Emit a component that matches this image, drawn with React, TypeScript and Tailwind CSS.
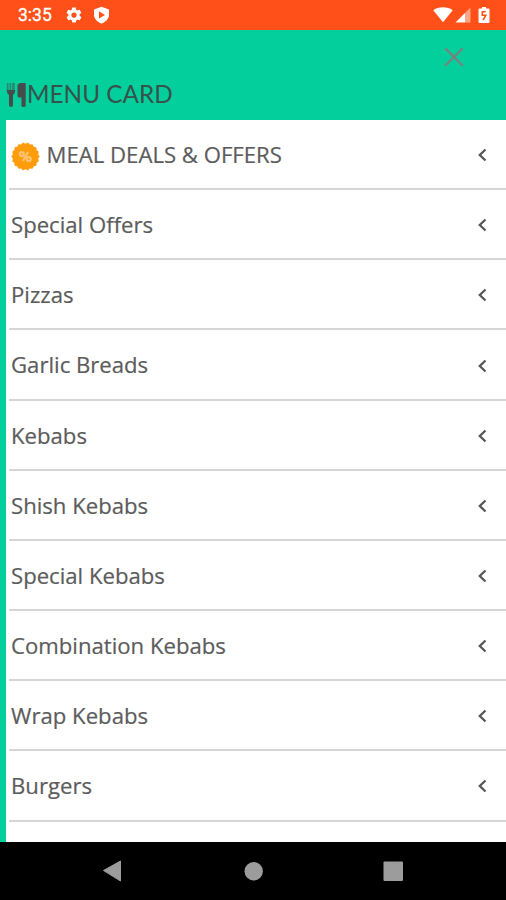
import { ReactNode } from "react";

interface Category {
    name: string
    offer?: boolean
}

const categories: Category[] = [
    { name: "MEAL DEALS & OFFERS", offer: true },
    { name: "Special Offers" },
    { name: "Pizzas" },
    { name: "Garlic Breads" },
    { name: "Kebabs" },
    { name: "Shish Kebabs" },
    { name: "Special Kebabs" },
    { name: "Combination Kebabs" },
    { name: "Wrap Kebabs" },
    { name: "Burgers" },
];

function StatusBar() {
    return (
        <div className="flex h-[30px] shrink-0 items-center bg-[#ff5019] pl-[18px] pr-[16px] text-white">
            <span className="w-[47px] pt-[2px] font-['Roboto',sans-serif] text-[17.500px] leading-none [-webkit-text-stroke:0.300px_white]">3:35</span>
            <svg width="18" height="18" viewBox="0 0 24 24" fill="currentColor">
                <path fillRule="evenodd" d="M19.4 13c0-.3.1-.6.1-1s0-.7-.1-1l2.1-1.700c.2-.1.3-.4.1-.6l-2-3.500c-.1-.2-.4-.3-.6-.2l-2.500 1c-.5-.4-1.100-.7-1.700-1l-.4-2.600c0-.2-.2-.4-.5-.4h-4c-.2 0-.4.2-.5.4L9 5c-.6.3-1.200.6-1.700 1l-2.500-1c-.2-.1-.5 0-.6.2l-2 3.500c-.1.2-.1.5.1.6L4.500 11c0 .3-.1.6-.1 1s0 .7.1 1l-2.100 1.700c-.2.1-.3.4-.1.6l2 3.500c.1.2.4.3.6.2l2.500-1c.5.4 1.100.7 1.700 1l.4 2.600c0 .2.2.4.5.4h4c.2 0 .4-.2.5-.4L15 19c.6-.3 1.200-.6 1.700-1l2.500 1c.2.1.5 0 .6-.2l2-3.500c.1-.2.1-.5-.1-.6zM12 15.500a3.500 3.500 0 1 1 0-7 3.500 3.500 0 0 1 0 7z" />
            </svg>
            <svg className="ml-[10px]" width="17" height="18" viewBox="0 0 17 18">
                <path fill="currentColor" d="M8.500.7 16 3.500v5.200c0 4-3 7.200-7.500 8.800C4 15.900 1 12.700 1 8.700V3.500z" />
                <path fill="#ff5019" d="M6 5.300v7.200l6-3.600z" />
            </svg>
            <svg className="ml-auto" width="20" height="16" viewBox="0 0 20 16">
                <path fill="currentColor" d="M.3 3.200C5.800-.6 14.200-.6 19.700 3.200L10 15.300z" />
            </svg>
            <svg className="ml-[2px]" width="16" height="16" viewBox="0 0 16 16">
                <path fill="#ffa585" d="M10 6 15.500.5v15H10z" />
                <path fill="currentColor" d="M.5 15.500 10 6v9.500z" />
            </svg>
            <svg className="ml-[7px]" width="12" height="18" viewBox="0 0 12 18">
                <path fill="currentColor" d="M4 1h4v1.500h2.500q1 0 1 1V16q0 1-1 1h-9q-1 0-1-1V3.500q0-1 1-1H4z" />
                <path fill="none" stroke="#ff5019" strokeWidth="1.600" d="M7.800 5.500 4.300 6v3.300h3.500L5 14.200" />
            </svg>
        </div>
    )
}

function CutleryIcon() {
    return (
        <svg width="21" height="26" viewBox="0 0 21 26" fill="#484b4b">
            <path fillOpacity=".55" d="M.8 1h1.700v7h1V1h1.700v7h1V1h2.500v8H.8z" />
            <path d="M.8 8h8.400c0 2.500-.8 4.200-2.200 4.800V23q0 2-1.900 2T3 23V12.800C1.600 12.200.8 10.500.8 8z" />
            <path d="M11.500 3.500Q12 1 15 1h4.700v22.500q0 1.500-2.100 1.500t-2.100-1.500V15.500h-2.500q-1.500 0-1.500-2z" />
        </svg>
    )
}

function OfferBadge() {
    const points = Array.from({ length: 36 }, (_, i) => {
        const radius = i % 2 ? 12.800 : 14.200;
        const angle = (i * Math.PI) / 18;
        return `${14.500 + radius * Math.cos(angle)},${14.500 + radius * Math.sin(angle)}`;
    }).join(" ");

    return (
        <svg className="mr-[7px] -ml-[0.500px] mt-[5px]" width="29" height="29" viewBox="0 0 29 29">
            <polygon points={points} fill="#ff9c0c" />
            <g fill="none" stroke="#ffc472" strokeWidth="2.200">
                <circle cx="10.800" cy="12" r="2" />
                <circle cx="17.800" cy="17" r="2" />
                <path d="m17 10-5 9" />
            </g>
        </svg>
    )
}

function Row({ name, children }: { name: string, children?: ReactNode }) {
    return (
        <li className="ml-[3px] flex h-[70.170px] shrink-0 items-center border-b-2 border-[#d6d6d6] pl-[2px] pr-[18px]">
            {children}
            <span className="whitespace-nowrap pt-[1px]">{name}</span>
            <svg className="ml-auto mt-[2px]" width="11" height="14" viewBox="0 0 11 14" fill="none" stroke="#575757" strokeWidth="2.300">
                <path d="M8.500 1.500 2.800 7l5.700 5.500" />
            </svg>
        </li>
    )
}

export default function App() {
    return (
        <div className="flex h-[900px] w-[506px] flex-col overflow-hidden bg-[#03cf9c]">
            <StatusBar />
            <header className="flex h-[90px] shrink-0 flex-col">
                <button className="ml-auto mr-[42px] mt-[17px] h-5 w-5" aria-label="Close">
                    <svg width="20" height="20" viewBox="0 0 20 20" stroke="#788180" strokeWidth="2.300">
                        <path d="m1.200 1.200 17.600 17.600M18.800 1.200 1.200 18.800" />
                    </svg>
                </button>
                <h1 className="mt-[15px] flex h-[26px] items-center pl-[6px] font-['Lato',sans-serif] text-[24.300px] leading-[26px] text-[#36524b]">
                    <CutleryIcon />
                    <span className="-mt-[2px]">MENU CARD</span>
                </h1>
            </header>
            <ul className="ml-[6px] flex min-h-0 flex-1 flex-col overflow-hidden bg-white font-['Open_Sans',sans-serif] text-[22.150px] text-[#5c5c5c] [-webkit-text-stroke:0.200px_#5c5c5c]">
                {categories.map((category) => (
                    <Row key={category.name} name={category.name}>
                        {category.offer && <OfferBadge />}
                    </Row>
                ))}
            </ul>
            <nav className="flex h-[58px] shrink-0 items-center bg-black">
                <svg width="506" height="58" viewBox="0 0 506 58" fill="#9c9c9c">
                    <path d="M103.500 28.500 120.500 19v20z" stroke="#9c9c9c" strokeLinejoin="round" />
                    <circle cx="253.700" cy="29.200" r="9.200" />
                    <rect x="383.500" y="19.500" width="19.500" height="19.500" rx="1" />
                </svg>
            </nav>
        </div>
    )
}
